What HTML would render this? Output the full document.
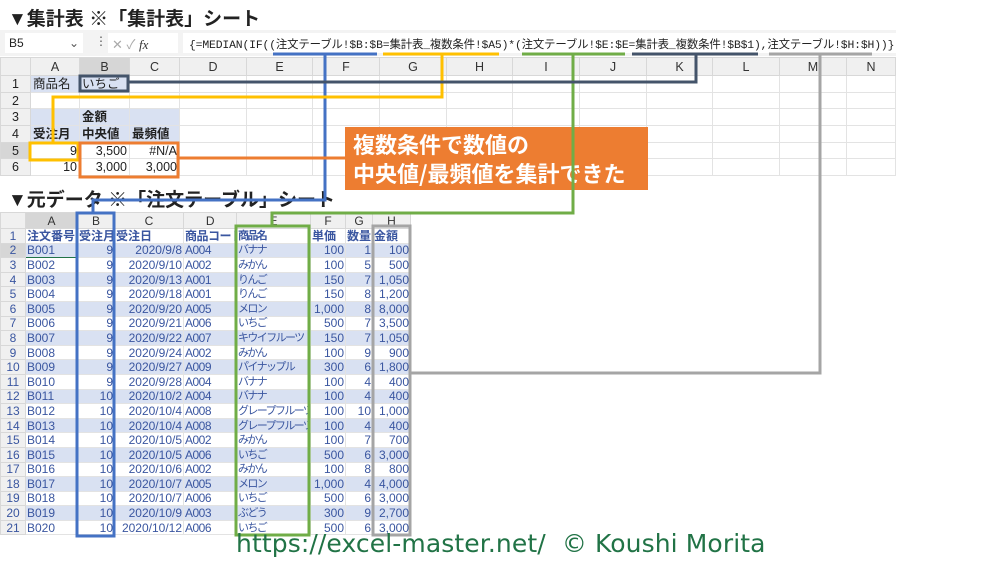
<!DOCTYPE html>
<html><head><meta charset="utf-8"><style>
*{margin:0;padding:0;box-sizing:border-box}
body{width:1000px;height:563px;background:#fff;position:relative;overflow:hidden;font-family:"Liberation Sans","Noto Sans CJK JP",sans-serif}
.abs{position:absolute}
.h{font-weight:bold;font-size:19px;color:#222;white-space:nowrap}
table{border-collapse:collapse;table-layout:fixed;position:absolute}
td{border:1px solid #e3e3e3;white-space:nowrap;overflow:hidden;padding:0 2px;vertical-align:middle}
.t1 tr{height:16.7px}
.t1 td{font-size:12.5px;color:#222;line-height:14px;height:16.7px}
.t2 tr{height:14.6px}
.t2 td{font-size:12px;color:#3a56a0;line-height:12px;height:14.6px;padding:0 1px}
.t2 td:nth-child(6){font-size:11px;letter-spacing:-1.6px}
.t2 td:nth-child(5){letter-spacing:-0.5px}
.ch td{background:#f0f0f0;color:#333;text-align:center;border-color:#d8d8d8}
.rn{background:#f0f0f0;color:#333;text-align:center;border-color:#d8d8d8}
.r{text-align:right}
.bl{background:#d9e1f2}
.b{font-weight:bold}
</style></head><body>
<div class="abs h" style="left:8px;top:4px">▼集計表 ※「集計表」シート</div>
<div class="abs" style="left:0;top:30px;width:896px;height:26px;background:#f3f3f3"></div>
<div class="abs" style="left:5px;top:33px;width:78px;height:20px;background:#fff;font-size:12px;padding:3px 4px;color:#222">B5<span style="float:right;color:#555">⌄</span></div>
<div class="abs" style="left:95px;top:34px;font-size:12px;color:#555">⋮</div>
<div class="abs" style="left:108px;top:33px;width:70px;height:20px;background:#fff;font-size:13px;color:#aaa;padding:1px 4px">✕ ✓ <i style="color:#333;font-family:'Liberation Serif',serif">fx</i></div>
<div class="abs" style="left:183px;top:33px;width:713px;height:20px;background:#fff;font-family:'Liberation Mono','Noto Sans CJK JP',monospace;font-size:11.4px;padding:3px 6px;color:#222;white-space:nowrap;letter-spacing:-0.15px">{=MEDIAN(IF((注文テーブル!$B:$B=集計表_複数条件!$A5)*(注文テーブル!$E:$E=集計表_複数条件!$B$1),注文テーブル!$H:$H))}</div>

<table class="t1" style="left:0;top:57px;width:895px">
<colgroup><col style="width:30px"><col style="width:49px"><col style="width:50px"><col style="width:50px"><col style="width:67px"><col style="width:66px"><col style="width:67px"><col style="width:67px"><col style="width:66px"><col style="width:67px"><col style="width:67px"><col style="width:66px"><col style="width:67px"><col style="width:67px"><col style="width:49px"></colgroup>
<tr class="ch" style="height:18px"><td></td><td>A</td><td style="background:#d6d6d6">B</td><td>C</td><td>D</td><td>E</td><td>F</td><td>G</td><td>H</td><td>I</td><td>J</td><td>K</td><td>L</td><td>M</td><td>N</td></tr>
<tr><td class="rn">1</td><td class="bl">商品名</td><td class="bl">いちご</td><td></td><td></td><td></td><td></td><td></td><td></td><td></td><td></td><td></td><td></td><td></td><td></td></tr>
<tr><td class="rn">2</td><td></td><td></td><td></td><td></td><td></td><td></td><td></td><td></td><td></td><td></td><td></td><td></td><td></td><td></td></tr>
<tr><td class="rn">3</td><td class="bl"></td><td class="bl b">金額</td><td class="bl"></td><td></td><td></td><td></td><td></td><td></td><td></td><td></td><td></td><td></td><td></td><td></td></tr>
<tr><td class="rn">4</td><td class="bl b">受注月</td><td class="bl b">中央値</td><td class="bl b">最頻値</td><td></td><td></td><td></td><td></td><td></td><td></td><td></td><td></td><td></td><td></td><td></td></tr>
<tr><td class="rn" style="background:#d6d6d6">5</td><td class="r">9</td><td class="r">3,500</td><td class="r">#N/A</td><td></td><td></td><td></td><td></td><td></td><td></td><td></td><td></td><td></td><td></td><td></td></tr>
<tr><td class="rn">6</td><td class="r">10</td><td class="r">3,000</td><td class="r">3,000</td><td></td><td></td><td></td><td></td><td></td><td></td><td></td><td></td><td></td><td></td><td></td></tr>
</table>

<div class="abs h" style="left:8px;top:185px;background:#fff;width:300px">▼元データ ※「注文テーブル」シート</div>

<table class="t2" style="left:0;top:212px;width:410px">
<colgroup><col style="width:25px"><col style="width:52px"><col style="width:37px"><col style="width:69px"><col style="width:53px"><col style="width:74px"><col style="width:35px"><col style="width:27px"><col style="width:38px"></colgroup>
<tr class="ch" style="height:16px"><td></td><td style="background:#d6d6d6">A</td><td>B</td><td>C</td><td>D</td><td style="letter-spacing:0;font-size:12px">E</td><td>F</td><td>G</td><td>H</td></tr>
<tr class="b"><td class="rn" style="font-weight:normal">1</td><td>注文番号</td><td>受注月</td><td>受注日</td><td>商品コード</td><td>商品名</td><td>単価</td><td>数量</td><td>金額</td></tr>
<tr class="bl"><td class="rn" style="background:#d6d6d6">2</td><td style="border:1.5px solid #217346">B001</td><td class="r">9</td><td class="r">2020/9/8</td><td>A004</td><td>バナナ</td><td class="r">100</td><td class="r">1</td><td class="r">100</td></tr>
<tr><td class="rn">3</td><td>B002</td><td class="r">9</td><td class="r">2020/9/10</td><td>A002</td><td>みかん</td><td class="r">100</td><td class="r">5</td><td class="r">500</td></tr>
<tr class="bl"><td class="rn">4</td><td>B003</td><td class="r">9</td><td class="r">2020/9/13</td><td>A001</td><td>りんご</td><td class="r">150</td><td class="r">7</td><td class="r">1,050</td></tr>
<tr><td class="rn">5</td><td>B004</td><td class="r">9</td><td class="r">2020/9/18</td><td>A001</td><td>りんご</td><td class="r">150</td><td class="r">8</td><td class="r">1,200</td></tr>
<tr class="bl"><td class="rn">6</td><td>B005</td><td class="r">9</td><td class="r">2020/9/20</td><td>A005</td><td>メロン</td><td class="r">1,000</td><td class="r">8</td><td class="r">8,000</td></tr>
<tr><td class="rn">7</td><td>B006</td><td class="r">9</td><td class="r">2020/9/21</td><td>A006</td><td>いちご</td><td class="r">500</td><td class="r">7</td><td class="r">3,500</td></tr>
<tr class="bl"><td class="rn">8</td><td>B007</td><td class="r">9</td><td class="r">2020/9/22</td><td>A007</td><td>キウイフルーツ</td><td class="r">150</td><td class="r">7</td><td class="r">1,050</td></tr>
<tr><td class="rn">9</td><td>B008</td><td class="r">9</td><td class="r">2020/9/24</td><td>A002</td><td>みかん</td><td class="r">100</td><td class="r">9</td><td class="r">900</td></tr>
<tr class="bl"><td class="rn">10</td><td>B009</td><td class="r">9</td><td class="r">2020/9/27</td><td>A009</td><td>パイナップル</td><td class="r">300</td><td class="r">6</td><td class="r">1,800</td></tr>
<tr><td class="rn">11</td><td>B010</td><td class="r">9</td><td class="r">2020/9/28</td><td>A004</td><td>バナナ</td><td class="r">100</td><td class="r">4</td><td class="r">400</td></tr>
<tr class="bl"><td class="rn">12</td><td>B011</td><td class="r">10</td><td class="r">2020/10/2</td><td>A004</td><td>バナナ</td><td class="r">100</td><td class="r">4</td><td class="r">400</td></tr>
<tr><td class="rn">13</td><td>B012</td><td class="r">10</td><td class="r">2020/10/4</td><td>A008</td><td>グレープフルーツ</td><td class="r">100</td><td class="r">10</td><td class="r">1,000</td></tr>
<tr class="bl"><td class="rn">14</td><td>B013</td><td class="r">10</td><td class="r">2020/10/4</td><td>A008</td><td>グレープフルーツ</td><td class="r">100</td><td class="r">4</td><td class="r">400</td></tr>
<tr><td class="rn">15</td><td>B014</td><td class="r">10</td><td class="r">2020/10/5</td><td>A002</td><td>みかん</td><td class="r">100</td><td class="r">7</td><td class="r">700</td></tr>
<tr class="bl"><td class="rn">16</td><td>B015</td><td class="r">10</td><td class="r">2020/10/5</td><td>A006</td><td>いちご</td><td class="r">500</td><td class="r">6</td><td class="r">3,000</td></tr>
<tr><td class="rn">17</td><td>B016</td><td class="r">10</td><td class="r">2020/10/6</td><td>A002</td><td>みかん</td><td class="r">100</td><td class="r">8</td><td class="r">800</td></tr>
<tr class="bl"><td class="rn">18</td><td>B017</td><td class="r">10</td><td class="r">2020/10/7</td><td>A005</td><td>メロン</td><td class="r">1,000</td><td class="r">4</td><td class="r">4,000</td></tr>
<tr><td class="rn">19</td><td>B018</td><td class="r">10</td><td class="r">2020/10/7</td><td>A006</td><td>いちご</td><td class="r">500</td><td class="r">6</td><td class="r">3,000</td></tr>
<tr class="bl"><td class="rn">20</td><td>B019</td><td class="r">10</td><td class="r">2020/10/9</td><td>A003</td><td>ぶどう</td><td class="r">300</td><td class="r">9</td><td class="r">2,700</td></tr>
<tr><td class="rn">21</td><td>B020</td><td class="r">10</td><td class="r">2020/10/12</td><td>A006</td><td>いちご</td><td class="r">500</td><td class="r">6</td><td class="r">3,000</td></tr>
</table>

<div class="abs" style="left:345px;top:127px;width:303px;height:63px;background:#ed7d31;color:#fff;font-weight:bold;font-size:22px;line-height:29px;padding:3px 8px;font-family:'Noto Sans CJK JP',sans-serif">複数条件で数値の<br>中央値/最頻値を集計できた</div>

<svg class="abs" style="left:0;top:0" width="1000" height="563" fill="none">
<path d="M273 54H377M325 54V200H93V213" stroke="#4472c4" stroke-width="3"/>
<rect x="77" y="213" width="37" height="323" stroke="#4472c4" stroke-width="3"/>
<path d="M383 54H499M442 54V97H53V143" stroke="#ffc000" stroke-width="3"/>
<rect x="30" y="143" width="48" height="17" stroke="#ffc000" stroke-width="3"/>
<path d="M522 54H625M573 54V213H272V226" stroke="#70ad47" stroke-width="3"/>
<rect x="236" y="226" width="73" height="309" stroke="#70ad47" stroke-width="3"/>
<path d="M632 54H758M696 54V82H129" stroke="#44546a" stroke-width="3"/>
<rect x="80" y="76" width="48" height="15" stroke="#44546a" stroke-width="3"/>
<path d="M769 54H872M820 54V373H410" stroke="#a5a5a5" stroke-width="3"/>
<rect x="373" y="226" width="37" height="309" stroke="#a5a5a5" stroke-width="3"/>
<path d="M178 158H345" stroke="#ed7d31" stroke-width="3"/>
<rect x="80" y="143" width="98" height="34" stroke="#ed7d31" stroke-width="3"/>
</svg>

<div class="abs" style="left:236px;top:529px;font-size:25px;color:#217346;white-space:nowrap;font-family:'DejaVu Sans',sans-serif;letter-spacing:0.1px">https://excel-master.net/&nbsp; © Koushi Morita</div>
</body></html>
